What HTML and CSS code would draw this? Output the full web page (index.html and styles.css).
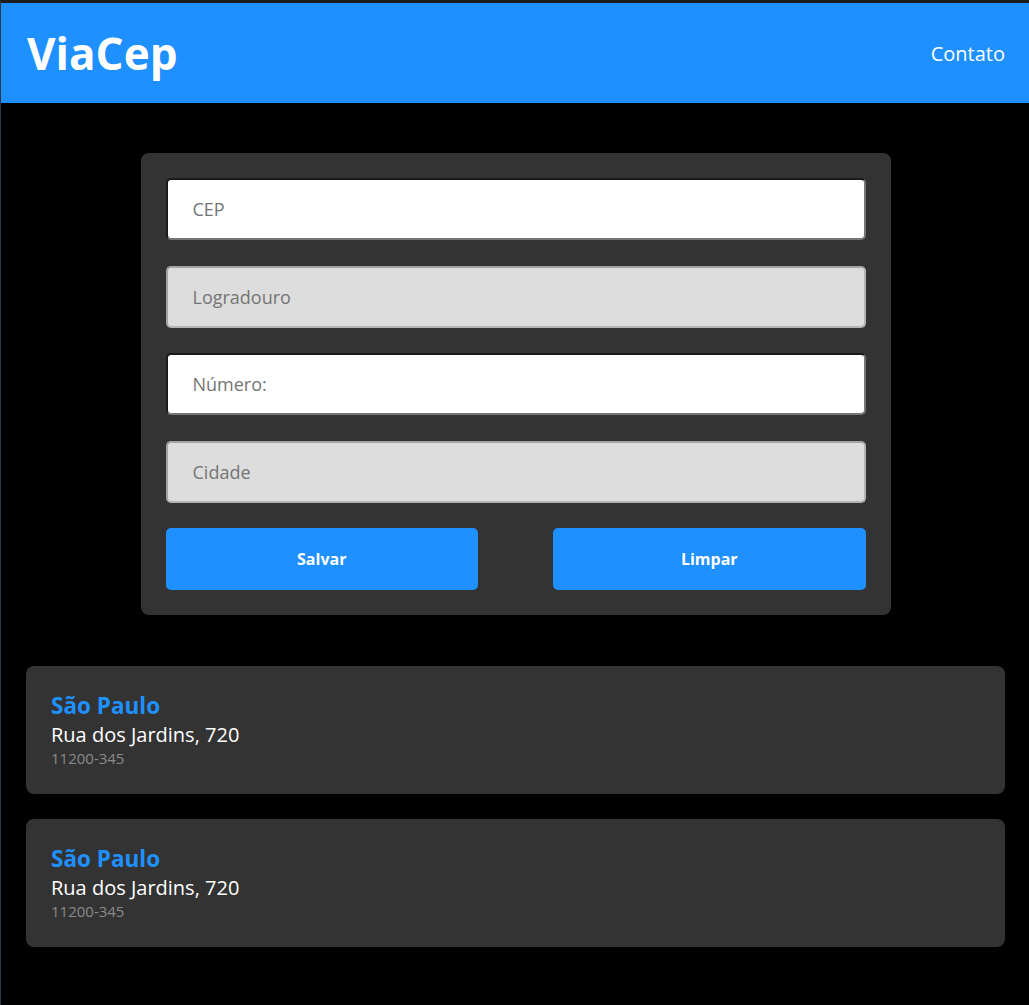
FILE: index.html
```html
<!DOCTYPE html>
<html lang="pt-BR">
<head>
<meta charset="utf-8">
<title>ViaCep</title>
<link rel="stylesheet" href="styles.css">
</head>
<body>
<header class="topbar">
  <h1 class="logo">ViaCep</h1>
  <a class="nav-link" href="#">Contato</a>
</header>
<main class="content">
  <form class="form-card">
    <input class="field" type="text" placeholder="CEP">
    <input class="field field-locked" type="text" placeholder="Logradouro" disabled>
    <input class="field" type="text" placeholder="Número:">
    <input class="field field-locked" type="text" placeholder="Cidade" disabled>
    <div class="actions">
      <button class="btn" type="button">Salvar</button>
      <button class="btn" type="button">Limpar</button>
    </div>
  </form>
  <section class="results">
    <article class="result-card">
      <h2 class="city">São Paulo</h2>
      <p class="street">Rua dos Jardins, 720</p>
      <p class="cep">11200-345</p>
    </article>
    <article class="result-card">
      <h2 class="city">São Paulo</h2>
      <p class="street">Rua dos Jardins, 720</p>
      <p class="cep">11200-345</p>
    </article>
  </section>
</main>
</body>
</html>
```

FILE: styles.css
```css
* { box-sizing: border-box; }

html { background: #000; }

body {
  margin: 0;
  min-height: 1005px;
  background: #000;
  border-top: 3px solid #1c1c1c;
  border-left: 1px solid #2c3a48;
  font-family: "Open Sans", "Noto Sans", sans-serif;
  color: #fff;
}

.topbar {
  height: 100px;
  background: #1e90ff;
  display: flex;
  align-items: center;
  justify-content: space-between;
  padding: 0 24px 0 26px;
}

.logo {
  margin: 0;
  font-size: 44px;
  font-weight: 700;
  color: #fff;
  line-height: 1;
}

.nav-link {
  color: #fff;
  text-decoration: none;
  font-size: 20px;
}

.content {
  padding: 50px 24px 40px 25px;
}

.form-card {
  width: 750px;
  margin: 0 auto;
  background: #333;
  border-radius: 8px;
  padding: 25px;
  display: flex;
  flex-direction: column;
  gap: 25.5px;
}

.field {
  height: 62px;
  width: 100%;
  border-radius: 5px;
  border-width: 2px;
  border-style: solid;
  border-color: #1a1a1a #777 #777 #1a1a1a;
  background: #fff;
  padding: 0 25px;
  font-family: "Open Sans", "Noto Sans", sans-serif;
  font-size: 18px;
  color: #222;
}

.field::placeholder { color: #757575; }

.field-locked {
  background: #ddd;
  border-color: #a4a4a4 #b4b4b4 #b4b4b4 #a4a4a4;
}

.actions {
  display: grid;
  grid-template-columns: 1fr 1fr;
  gap: 75px;
}

.btn {
  height: 62px;
  border: none;
  border-radius: 5px;
  background: #1e90ff;
  color: #fff;
  font-family: "Open Sans", "Noto Sans", sans-serif;
  font-weight: 700;
  font-size: 16px;
}

.results {
  margin-top: 51px;
  display: flex;
  flex-direction: column;
  gap: 25px;
}

.result-card {
  background: #333;
  border-radius: 8px;
  padding: 25px 25px 25px;
}

.city {
  margin: 0;
  font-size: 22.5px;
  font-weight: 700;
  color: #1e90ff;
  line-height: 30px;
}

.street {
  margin: 0;
  font-size: 20px;
  line-height: 27px;
  color: #fff;
}

.cep {
  margin: 0;
  font-size: 15px;
  line-height: 21px;
  color: #8a8a8a;
}
```
